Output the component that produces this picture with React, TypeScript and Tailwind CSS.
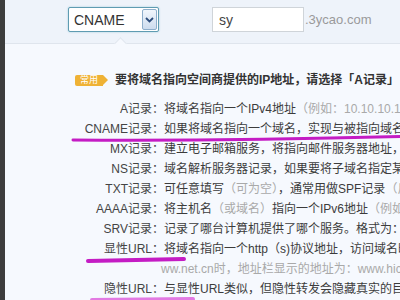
const font = { fontFamily: '"Liberation Sans", "Noto Sans CJK SC", sans-serif' };

type Part = { t: string; muted?: boolean };
type Row = { label: string; parts: Part[]; cont?: boolean };

const rows: Row[] = [
  { label: "A记录", parts: [{ t: "将域名指向一个IPv4地址" }, { t: "（例如：10.10.10.10）", muted: true }] },
  { label: "CNAME记录", parts: [{ t: "如果将域名指向一个域名，实现与被指向域名相同的访问效果" }] },
  { label: "MX记录", parts: [{ t: "建立电子邮箱服务，将指向邮件服务器地址，需要设置MX记录" }] },
  { label: "NS记录", parts: [{ t: "域名解析服务器记录，如果要将子域名指定某个域名服务器来解析" }] },
  {
    label: "TXT记录",
    parts: [{ t: "可任意填写" }, { t: "（可为空）", muted: true }, { t: "，通常用做SPF记录" }, { t: "（反垃圾邮件）", muted: true }],
  },
  {
    label: "AAAA记录",
    parts: [{ t: "将主机名" }, { t: "（或域名）", muted: true }, { t: "指向一个IPv6地址" }, { t: "（例如：ff03:0:0:0:0:0:0:c1）", muted: true }],
  },
  { label: "SRV记录", parts: [{ t: "记录了哪台计算机提供了哪个服务。格式为：服务的名字.协议的类型" }] },
  { label: "显性URL", parts: [{ t: "将域名指向一个http（s)协议地址，访问域名时，自动跳转至目标地址" }] },
  { label: "", cont: true, parts: [{ t: "ww.net.cn时，地址栏显示的地址为：www.hichina.com", muted: true }] },
  { label: "隐性URL", parts: [{ t: "与显性URL类似，但隐性转发会隐藏真实的目标地址" }] },
];

function Header() {
  return (
    <div className="relative h-[44px] shrink-0 border-b border-[#dfe5ed] bg-[#eef3fa] pl-[63px] pt-[7px]">
      <div className="flex items-center">
        <div className="flex h-[25px] w-[91px] items-center justify-between rounded-[2px] border border-[#5f9cb2] bg-white pl-[5px] pr-[1px] shadow-[0_0_2px_#9cc8d8]">
          <span className="text-[14px] leading-none text-[#333]">CNAME</span>
          <span className="flex h-[21px] w-[15px] items-center justify-center rounded-[2px] border border-[#8eaecb] bg-gradient-to-b from-[#f1f6fc] to-[#cddcee]">
            <svg width="9" height="6" viewBox="0 0 9 6">
              <path d="M1 1 L4.5 4.5 L8 1" fill="none" stroke="#2d4d7c" strokeWidth="1.8" />
            </svg>
          </span>
        </div>
        <div className="ml-[53px] flex h-[25px] w-[92px] items-center border border-[#cfd4d9] bg-white pl-[6px]">
          <span className="text-[14px] leading-none text-[#444]">sy</span>
        </div>
        <span className="ml-[1px] text-[13px] text-[#9a9a9a]">.3ycao.com</span>
      </div>
      <div className="absolute bottom-[-5px] left-[111px] h-[9px] w-[9px] rotate-45 border-l border-t border-[#dfe5ed] bg-[#f6f9fe]" />
    </div>
  );
}

function Badge() {
  return (
    <div className="flex items-center">
      <div className="flex h-[11px] w-[28px] items-center justify-center rounded-l-[2px] bg-[#efb235] text-[9px] leading-none text-white">
        常用
      </div>
      <div className="h-0 w-0 border-y-[5.5px] border-l-[5px] border-y-transparent border-l-[#efb235]" />
    </div>
  );
}

export default function App() {
  return (
    <div className="relative flex h-[300px] w-[400px] overflow-hidden bg-[#f6f9fe] text-[12px]" style={font}>
      <div className="w-[5px] shrink-0 bg-[#3d3d3d]" />
      <div className="flex min-w-0 flex-1 flex-col">
        <Header />
        <div className="flex h-[20px] items-center whitespace-nowrap pl-[70px] mt-[26px]">
          <Badge />
          <span className="ml-[7px] font-bold text-[#333]">要将域名指向空间商提供的IP地址，请选择「A记录」</span>
        </div>
        <div className="mt-[9px] flex flex-col">
          {rows.map((r, i) => (
            <div key={i} className="flex h-[20px] items-center whitespace-nowrap text-[#3c3c3c]">
              <span className="w-[147px] shrink-0 text-right text-[#444]">{r.label}</span>
              <span className="w-[12px] shrink-0 text-[#444]">{r.cont ? "" : "："}</span>
              <span className={r.cont ? "ml-[-3px]" : ""}>
                {r.parts.map((p, j) => (
                  <span key={j} className={p.muted ? "text-[#a9a9a9]" : ""}>
                    {p.t}
                  </span>
                ))}
              </span>
            </div>
          ))}
        </div>
      </div>
      <svg className="pointer-events-none absolute inset-0" width="400" height="300" viewBox="0 0 400 300">
        <path d="M73 140 Q 230 141 400 136.5" fill="none" stroke="#c41cc4" strokeWidth="3" strokeLinecap="round" />
        <path d="M88 261 L 184 259" fill="none" stroke="#c41cc4" strokeWidth="4" strokeLinecap="round" />
        <path d="M92 300 L 193 299" fill="none" stroke="#e27ae2" strokeWidth="4" strokeLinecap="round" />
      </svg>
    </div>
  );
}
